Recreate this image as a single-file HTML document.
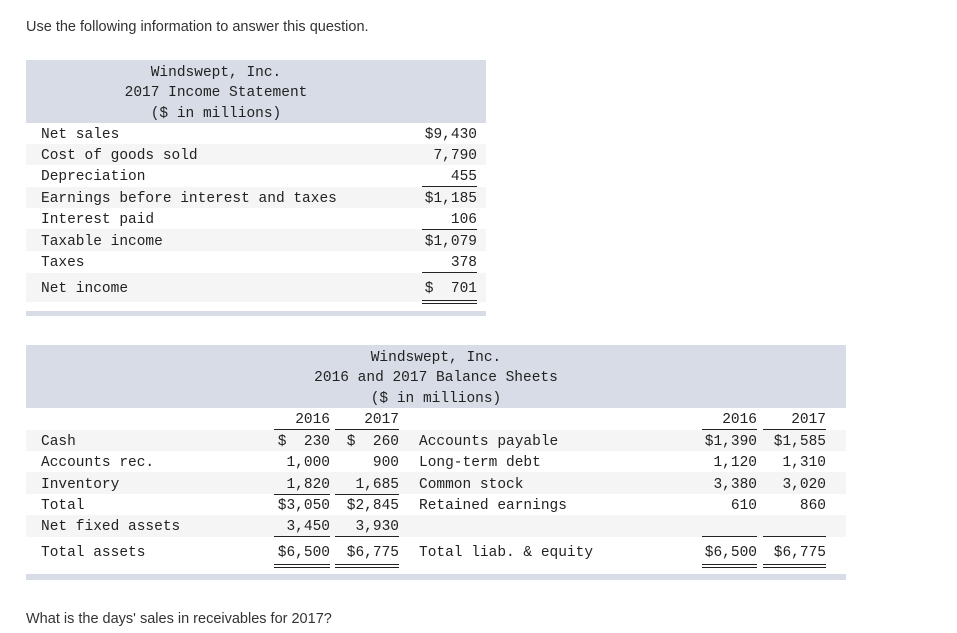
<!DOCTYPE html>
<html><head><meta charset="utf-8"><style>
body{margin:0;width:957px;height:633px;background:#fff;position:relative;overflow:hidden;font-family:"Liberation Sans",sans-serif;color:#333}
.a{position:absolute}
.t{position:absolute;white-space:pre;font-family:"Liberation Mono",monospace;font-size:14.5px;line-height:21px;color:#222;margin-top:2px}
.r{text-align:right}
.hb{position:absolute;background:#d8dce6}
.g{position:absolute;background:#f5f5f5}
.u{position:absolute;height:1px;background:#222}
.d{position:absolute;height:4px;border-top:1px solid #222;border-bottom:1px solid #222;box-sizing:border-box}
.p{position:absolute;font-size:14.5px;color:#333;white-space:nowrap}
</style></head><body>
<div class="p" style="left:26px;top:19px">Use the following information to answer this question.</div>

<!-- income statement -->
<div class="hb" style="left:26px;top:60px;width:460px;height:63px"></div>
<div class="t" style="left:26px;width:380px;top:61px;text-align:center">Windswept, Inc.</div>
<div class="t" style="left:26px;width:380px;top:81px;text-align:center">2017 Income Statement</div>
<div class="t" style="left:26px;width:380px;top:102px;text-align:center">($ in millions)</div>
<div class="g" style="left:26px;top:144px;width:460px;height:21px"></div>
<div class="g" style="left:26px;top:187px;width:460px;height:21px"></div>
<div class="g" style="left:26px;top:229px;width:460px;height:22px"></div>
<div class="g" style="left:26px;top:273px;width:460px;height:29px"></div>
<div class="hb" style="left:26px;top:311px;width:460px;height:5px"></div>

<div class="t" style="left:41px;top:123px">Net sales</div>
<div class="t" style="left:41px;top:144px">Cost of goods sold</div>
<div class="t" style="left:41px;top:165px">Depreciation</div>
<div class="t" style="left:41px;top:187px">Earnings before interest and taxes</div>
<div class="t" style="left:41px;top:208px">Interest paid</div>
<div class="t" style="left:41px;top:230px">Taxable income</div>
<div class="t" style="left:41px;top:251px">Taxes</div>
<div class="t" style="left:41px;top:277px">Net income</div>
<div class="t r" style="right:480px;top:123px">$9,430</div>
<div class="t r" style="right:480px;top:144px">7,790</div>
<div class="t r" style="right:480px;top:165px">455</div>
<div class="u" style="left:422px;width:55px;top:186px"></div>
<div class="t r" style="right:480px;top:187px">$1,185</div>
<div class="t r" style="right:480px;top:208px">106</div>
<div class="u" style="left:422px;width:55px;top:229px"></div>
<div class="t r" style="right:480px;top:230px">$1,079</div>
<div class="t r" style="right:480px;top:251px">378</div>
<div class="u" style="left:422px;width:55px;top:272px"></div>
<div class="t r" style="right:480px;top:277px">$  701</div>
<div class="d" style="left:422px;width:55px;top:300px"></div>

<!-- balance sheet -->
<div class="hb" style="left:26px;top:345px;width:820px;height:63px"></div>
<div class="t" style="left:26px;width:820px;top:346px;text-align:center">Windswept, Inc.</div>
<div class="t" style="left:26px;width:820px;top:366px;text-align:center">2016 and 2017 Balance Sheets</div>
<div class="t" style="left:26px;width:820px;top:387px;text-align:center">($ in millions)</div>
<div class="g" style="left:26px;top:430px;width:820px;height:21px"></div>
<div class="g" style="left:26px;top:472px;width:820px;height:22px"></div>
<div class="g" style="left:26px;top:515px;width:820px;height:22px"></div>
<div class="hb" style="left:26px;top:574px;width:820px;height:6px"></div>

<div class="t r" style="right:627px;top:408px">2016</div>
<div class="t r" style="right:558px;top:408px">2017</div>
<div class="t r" style="right:200px;top:408px">2016</div>
<div class="t r" style="right:131px;top:408px">2017</div>
<div class="u" style="left:274px;width:56px;top:429px"></div>
<div class="u" style="left:335px;width:64px;top:429px"></div>
<div class="u" style="left:702px;width:55px;top:429px"></div>
<div class="u" style="left:763px;width:63px;top:429px"></div>

<div class="t" style="left:41px;top:430px">Cash</div>
<div class="t" style="left:41px;top:451px">Accounts rec.</div>
<div class="t" style="left:41px;top:473px">Inventory</div>
<div class="t" style="left:41px;top:494px">Total</div>
<div class="t" style="left:41px;top:515px">Net fixed assets</div>
<div class="t" style="left:41px;top:541px">Total assets</div>

<div class="t r" style="right:627px;top:430px">$  230</div>
<div class="t r" style="right:558px;top:430px">$  260</div>
<div class="t r" style="right:627px;top:451px">1,000</div>
<div class="t r" style="right:558px;top:451px">900</div>
<div class="t r" style="right:627px;top:473px">1,820</div>
<div class="t r" style="right:558px;top:473px">1,685</div>
<div class="u" style="left:274px;width:56px;top:494px"></div>
<div class="u" style="left:335px;width:64px;top:494px"></div>
<div class="t r" style="right:627px;top:494px">$3,050</div>
<div class="t r" style="right:558px;top:494px">$2,845</div>
<div class="t r" style="right:627px;top:515px">3,450</div>
<div class="t r" style="right:558px;top:515px">3,930</div>
<div class="u" style="left:274px;width:56px;top:536px"></div>
<div class="u" style="left:335px;width:64px;top:536px"></div>
<div class="t r" style="right:627px;top:541px">$6,500</div>
<div class="t r" style="right:558px;top:541px">$6,775</div>
<div class="d" style="left:274px;width:56px;top:564px"></div>
<div class="d" style="left:335px;width:64px;top:564px"></div>

<div class="t" style="left:419px;top:430px">Accounts payable</div>
<div class="t" style="left:419px;top:451px">Long-term debt</div>
<div class="t" style="left:419px;top:473px">Common stock</div>
<div class="t" style="left:419px;top:494px">Retained earnings</div>
<div class="t" style="left:419px;top:541px">Total liab. &amp; equity</div>

<div class="t r" style="right:200px;top:430px">$1,390</div>
<div class="t r" style="right:131px;top:430px">$1,585</div>
<div class="t r" style="right:200px;top:451px">1,120</div>
<div class="t r" style="right:131px;top:451px">1,310</div>
<div class="t r" style="right:200px;top:473px">3,380</div>
<div class="t r" style="right:131px;top:473px">3,020</div>
<div class="t r" style="right:200px;top:494px">610</div>
<div class="t r" style="right:131px;top:494px">860</div>
<div class="u" style="left:702px;width:55px;top:536px"></div>
<div class="u" style="left:763px;width:63px;top:536px"></div>
<div class="t r" style="right:200px;top:541px">$6,500</div>
<div class="t r" style="right:131px;top:541px">$6,775</div>
<div class="d" style="left:702px;width:55px;top:564px"></div>
<div class="d" style="left:763px;width:63px;top:564px"></div>

<div class="p" style="left:26px;top:611px">What is the days' sales in receivables for 2017?</div>
</body></html>
